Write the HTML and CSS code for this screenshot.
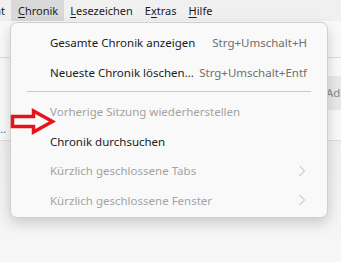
FILE: index.html
```html
<!DOCTYPE html>
<html lang="de">
  <head>
    <meta charset="UTF-8" />
    <title>Chronik-Menü</title>
    <link rel="stylesheet" href="styles.css">
  </head>
  <body>
    <div class="menubar">
      <span class="menu-item cut">Ansicht</span>
      <span class="menu-item active"><u>C</u>hronik</span>
      <span class="menu-item"><u>L</u>esezeichen</span>
      <span class="menu-item">E<u>x</u>tras</span>
      <span class="menu-item"><u>H</u>ilfe</span>
    </div>
    <div class="tabstrip"></div>
    <div class="navbar">
      <span class="dots">…</span>
      <div class="urlbar">Adresse</div>
    </div>
    <div class="content"></div>

    <!-- das aufgeklappte Chronik-Menü -->
    <div class="popup">
      <div class="entry">
        <span class="label">Gesamte Chronik anzeigen</span>
        <span class="shortcut">Strg+Umschalt+H</span>
      </div>
      <div class="entry">
        <span class="label">Neueste Chronik löschen…</span>
        <span class="shortcut">Strg+Umschalt+Entf</span>
      </div>
      <div class="separator"></div>
      <div class="entry disabled">
        <span class="label">Vorherige Sitzung wiederherstellen</span>
      </div>
      <div class="entry">
        <span class="label">Chronik durchsuchen</span>
      </div>
      <div class="entry disabled">
        <span class="label">Kürzlich geschlossene Tabs</span>
        <svg class="chevron" width="8" height="12" viewBox="0 0 8 12"><path d="M1.5 1 L6.5 6 L1.5 11" fill="none" stroke="#b4b4b4" stroke-width="1"/></svg>
      </div>
      <div class="entry disabled">
        <span class="label">Kürzlich geschlossene Fenster</span>
        <svg class="chevron" width="8" height="12" viewBox="0 0 8 12"><path d="M1.5 1 L6.5 6 L1.5 11" fill="none" stroke="#b4b4b4" stroke-width="1"/></svg>
      </div>
    </div>

    <!-- roter Hinweispfeil -->
    <svg class="arrow" width="46" height="28" viewBox="0 0 46 28">
      <path d="M2.5 8.5 H23.5 V3 L42.5 13.5 L23.5 24 V18.5 H2.5 Z" fill="#fbfbfb" stroke="#e5141b" stroke-width="3.5" stroke-linejoin="miter"/>
    </svg>
  </body>
</html>
```

FILE: styles.css
```css
body {
  margin: 0;
  width: 341px;
  height: 262px;
  overflow: hidden;
  position: relative;
  background: #f0f0f0;
  font-family: "Noto Sans", "Open Sans", sans-serif;
  font-size: 11.5px;
  color: #1b1b1b;
}
.menubar {
  display: flex;
  height: 21px;
  align-items: stretch;
  background: #f0f0f0;
  margin-left: -39px;
  font-size: 11px;
}
.menu-item {
  display: flex;
  align-items: center;
  padding: 0 6px;
}
.menu-item u {
  text-decoration-thickness: 1px;
  text-underline-offset: 2px;
}
.menu-item.active {
  background: #d9d9d9;
  padding: 0 6px 0 7px;
}
.tabstrip {
  height: 36px;
  background: #f9f9f9;
  border-bottom: 1px solid #dcdcdc;
}
.navbar {
  height: 82px;
  display: flex;
  align-items: flex-start;
  justify-content: space-between;
  background: #f9f9f9;
  border-bottom: 1px solid #dcdcdc;
}
.dots {
  align-self: flex-end;
  color: #3a6fb0;
  margin-left: -3px;
  padding-bottom: 4px;
}
.urlbar {
  width: 60px;
  height: 34px;
  line-height: 34px;
  margin-top: 18px;
  margin-right: -45px;
  padding-left: 2px;
  background: #e9e9e9;
  color: #8a8a8a;
  white-space: nowrap;
  overflow: hidden;
}
.content {
  height: 122px;
  background: linear-gradient(#f0f0f0, #f7f7f7);
}
.popup {
  position: absolute;
  left: 10px;
  top: 22px;
  width: 316px;
  padding: 5px 0 1.5px;
  background: #f9f9f9;
  border: 1px solid #cfcfcf;
  border-radius: 7px;
  box-shadow: 0 5px 14px rgba(0, 0, 0, 0.18);
}
.entry {
  height: 29.5px;
  display: flex;
  align-items: center;
  padding: 0 20px 0 39px;
  white-space: nowrap;
}
.label {
  flex: 1;
}
.shortcut {
  color: #6f6f6f;
}
.disabled {
  color: #a3a3a3;
}
.chevron {
  margin-right: 1px;
}
.separator {
  height: 1px;
  margin: 4px 16px 5px 16px;
  background: #c9c9c9;
}
.arrow {
  position: absolute;
  left: 10px;
  top: 108px;
}
```
